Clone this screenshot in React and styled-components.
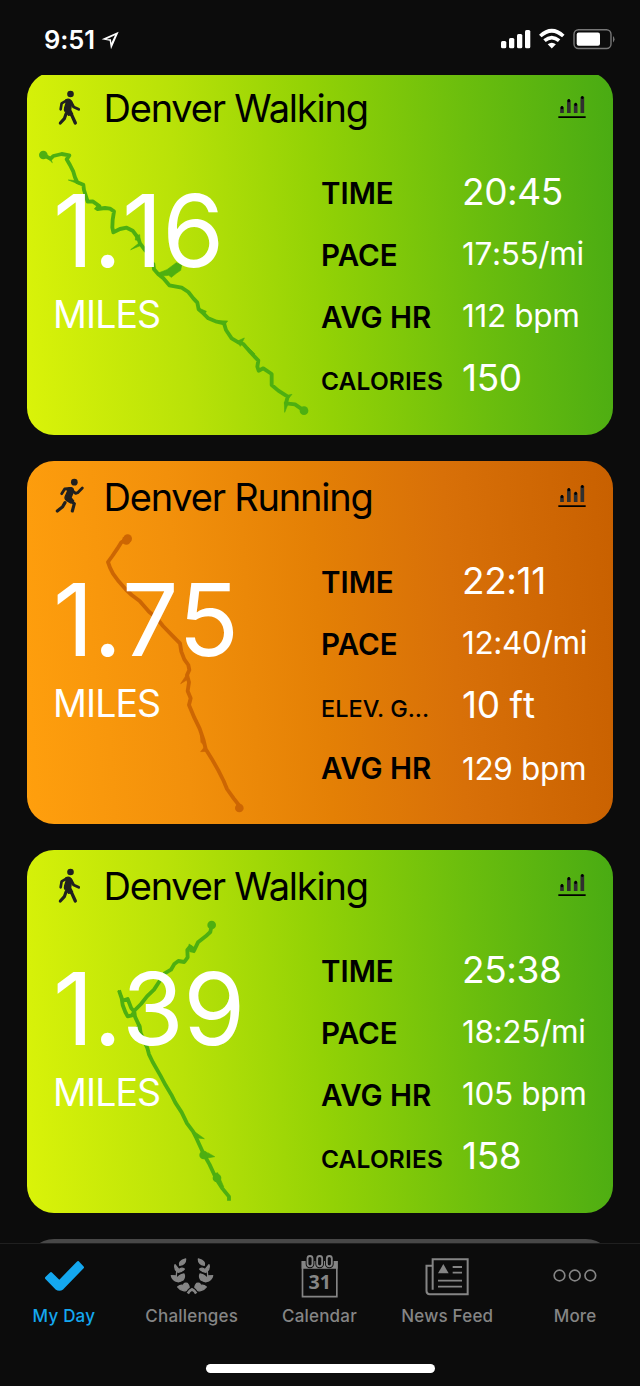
import styled, { createGlobalStyle } from "styled-components";

const GlobalStyle = createGlobalStyle`
    * {
        box-sizing: border-box;
    }

    body {
        margin: 0;
        background: #0C0C0C;
        font-family: Inter, "Liberation Sans", sans-serif;
    }
`

const Screen = styled.div`
    width: 640px;
    height: 1386px;
    display: flex;
    flex-direction: column;
    overflow: hidden;
    background: #0C0C0C;
`

const StatusBar = styled.header`
    height: 75px;
    flex: none;
    display: flex;
    justify-content: space-between;
    padding: 25px 25px 0 44px;
    color: #FFF;
`

const Clock = styled.div`
    display: flex;
    gap: 6.5px;
    font-size: 25.5px;
    line-height: 29px;
    font-weight: 600;
    letter-spacing: -0.1px;
`

const Feed = styled.main`
    flex: 1;
    min-height: 0;
    overflow: hidden;
    padding: 0 27.5px 0 27px;
`

const CardList = styled.div`
    display: flex;
    flex-direction: column;
    gap: 26px;
    margin-top: -3px;
`

const themes = {
    walking : {
        background : "linear-gradient(86deg, #DAF309 0%, #B9E208 27%, #93D205 50%, #6CBE0D 75%, #49AB13 100%)",
        route : "#4DAF11",
    },
    running : {
        background : "linear-gradient(86deg, #FF9F0D 0%, #F2900B 27%, #E48005 50%, #D87008 72%, #C86000 100%)",
        route : "#CC6603",
    },
}

const Card = styled.article`
    position: relative;
    height: 363px;
    flex: none;
    border-radius: 27px;
    overflow: hidden;
    background: ${(props) => props.$background};
`

const EmptyCard = styled.div`
    height: 363px;
    flex: none;
    border-radius: 27px;
    background: #484848;
`

const RouteMap = styled.svg`
    position: absolute;
    top: 0;
    left: 0;
    width: 293.33px;
    height: 363px;
`

const CardHeader = styled.div`
    position: relative;
    height: 71px;
    display: flex;
    align-items: center;
    padding: 1px 27px 0 22px;
`

const Title = styled.h2`
    flex: 1;
    margin: 0 0 0 9.5px;
    font-size: 38px;
    line-height: 70px;
    font-weight: 375;
    letter-spacing: -1.2px;
    color: #000;
    white-space: nowrap;
`

const CardBody = styled.div`
    position: relative;
    display: flex;
    padding-left: 26px;
`

const Summary = styled.div`
    width: 268px;
    padding-top: 37.5px;
    color: #FFF;
`

const Distance = styled.div`
    font-size: 100px;
    line-height: 100px;
    font-weight: 375;
    font-kerning: none;
    letter-spacing: -0.3px;
`

const Unit = styled.div`
    margin-top: 3.5px;
    font-size: 37.5px;
    line-height: 62px;
    font-weight: 400;
    letter-spacing: -0.9px;
`

const Metrics = styled.dl`
    flex: 1;
    margin: 0;
    padding-top: 16.5px;
`

const Metric = styled.div`
    height: 62px;
    display: flex;
    align-items: baseline;
    white-space: nowrap;

    /* keeps every row on one baseline whatever its text size */
    &::before {
        content: "\\200b";
        width: 0;
        font-size: 37px;
        line-height: 62px;
    }
`

const labelSizes = {
    large : "font-size: 29.5px; letter-spacing: 0;",
    medium : "font-size: 24.5px; letter-spacing: 0.15px;",
    small : "font-size: 23.5px; font-weight: 550; letter-spacing: 0;",
}

const Label = styled.dt`
    width: 141px;
    line-height: 1;
    font-weight: 600;
    color: #000;
    ${(props) => labelSizes[props.$size]}
`

const Value = styled.dd`
    position: relative;
    top: ${(props) => props.$small ? "-1px" : "1px"};
    margin: 0;
    font-size: ${(props) => props.$small ? "31.5px" : "37px"};
    line-height: 1;
    font-weight: 375;
    font-kerning: none;
    letter-spacing: ${(props) => props.$small ? "-0.35px" : "-0.4px"};
    color: #FFF;

    ${Metric}:last-child & {
        top: 1px;
    }
`

const TabBar = styled.nav`
    height: 143px;
    flex: none;
    display: grid;
    grid-template-columns: repeat(5, 1fr);
    grid-template-rows: 120px 1fr;
    justify-items: center;
    padding-right: 1px;
    border-top: 1px solid #202020;
    background: #0C0C0C;
`

const Tab = styled.a`
    display: flex;
    flex-direction: column;
    align-items: center;
    padding-top: 9px;
    color: ${(props) => props.$active ? "#14A8F0" : "#858585"};
`

const TabIcon = styled.svg`
    width: 48px;
    height: 44px;
    display: block;
    overflow: visible;
`

const TabLabel = styled.span`
    margin-top: 7px;
    font-size: 17px;
    line-height: 24px;
    font-weight: 500;
    letter-spacing: 0.2px;
    white-space: nowrap;
`

const HomeIndicator = styled.div`
    grid-column: 1 / -1;
    width: 229px;
    height: 9px;
    margin-left: 1px;
    border-radius: 5px;
    background: #FFF;
`

const SignalIcons = styled.svg`
    width: 114px;
    height: 22px;
    margin-top: 3px;
`

const Arrow = () => (
    <svg width="18" height="30" viewBox="0 0 54 90">
        <path d="M2 43 L53 20 L30 73 L26 47 Z M16 43 L30 43 L31 54 L42 31 Z" fill="#FFF" fillRule="evenodd" />
    </svg>
)

const Walker = () => (
    <svg width="45" height="45" viewBox="0 0 135 135" fill="none" stroke="#202020" strokeLinecap="round" strokeLinejoin="round">
        <circle cx="64.500" cy="24" r="10" fill="#202020" stroke="none" />
        <path d="M52 44 L38 52 L35 70" strokeWidth="8" />
        <path d="M66 48 L74 63 L89 70" strokeWidth="8.500" />
        <path d="M50 42 Q58 37 64 42 Q70 47 67 55 L65 72 L71 84 L59 88 L48 76 Q45 72 47 65 L51 52 Z" fill="#202020" strokeWidth="4" />
        <path d="M61 77 L69 89 L79 111" strokeWidth="10" />
        <path d="M51 84 L46 98 L34 111" strokeWidth="9.500" />
    </svg>
)

const Runner = () => (
    <svg width="45" height="45" viewBox="0 0 135 135" fill="none" stroke="#202020" strokeLinecap="round" strokeLinejoin="round">
        <circle cx="76" cy="21.500" r="10" fill="#202020" stroke="none" />
        <path d="M64 40 L47 42 L38 56" strokeWidth="8.500" />
        <path d="M69 46 L80 55 L86 53 L100 39" strokeWidth="8.500" />
        <path d="M53 42 Q66 34 72 41 Q75 46 72 53 L66 68 L74 78 L65 84 L52 76 Q46 71 49 64 L56 48 Z" fill="#202020" strokeWidth="4" />
        <path d="M60 74 L76 86 L70 108" strokeWidth="9.500" />
        <path d="M48 83 L41 95 L25 108" strokeWidth="9.500" />
    </svg>
)

const ChartIcon = () => (
    <svg width="28" height="26" viewBox="0 0 84 78">
        <path d="M12 54 V37 M32.500 54 V16 M53 54 V27 M73 54 V6" stroke="#303030" strokeWidth="11" />
        <path d="M12 39 V37 M32.500 18 V16 M53 29 V27 M73 8 V7" stroke="#000" strokeWidth="8" strokeLinecap="round" />
        <path d="M1 66.500 H83" stroke="#000" strokeWidth="5" />
    </svg>
)

const CheckIcon = () => (
    <TabIcon viewBox="0 0 144 132">
        <path d="M19 75 L33 61 L58 86 L114 28 L128 43 L67 106 Q58 113 49 106 Z" fill="currentColor" stroke="currentColor" strokeWidth="8" strokeLinejoin="round" />
    </TabIcon>
)

const Leaves = () => (
    <g stroke="currentColor" strokeWidth="4" strokeLinejoin="round">
        <path d="M53 18 Q53 34 35 37 Q30 25 53 18 Z" />
        <path d="M21 35 L33 50 Q40 42 49 48 Q40 58 31 58 Q17 50 21 35 Z" />
        <path d="M10 68 L25 69 L27 78 Q31 66 48 63 Q52 72 45 81 Q36 87 29 86 Q13 83 10 68 Z" />
        <path d="M29 102 Q37 94 46 97 Q48 88 58 91 Q67 102 61 110 Q55 115 46 113 Q35 111 29 102 Z" />
        <path d="M26 54 L25 70" fill="none" />
    </g>
)

const LaurelIcon = () => (
    <TabIcon viewBox="0 0 144 132" fill="currentColor">
        <Leaves />
        <g transform="translate(144 0) scale(-1 1)">
            <Leaves />
        </g>
        <path d="M56 119 Q62 108 72 104 Q82 108 88 119 L81 124 Q78 117 72 114 Q66 117 63 124 Z" stroke="#0C0C0C" strokeWidth="6" paintOrder="stroke" />
    </TabIcon>
)

const DateNumber = styled.text`
    font-family: "Open Sans", sans-serif;
    font-size: 59px;
    font-weight: 700;
`

const CalendarIcon = () => (
    <TabIcon viewBox="-2 0 144 132" fill="none" stroke="currentColor">
        <path d="M20.500 24 V131 H123.500 V24" strokeWidth="5" />
        <path d="M18 24 H126 V47 H18 Z" fill="currentColor" stroke="none" />
        {
            [43, 72, 101].map((x) => (
                <g key={x}>
                    <rect x={x - 8} y="9" width="16" height="32" rx="8" fill="#0C0C0C" stroke="#0C0C0C" strokeWidth="10" />
                    <rect x={x - 7.5} y="9" width="15" height="31" rx="7.500" strokeWidth="5.500" />
                </g>
            ))
        }
        <DateNumber x="72.500" y="108" textAnchor="middle" fill="currentColor" stroke="none">31</DateNumber>
    </TabIcon>
)

const NewsIcon = () => (
    <TabIcon viewBox="0 0 144 132" fill="none" stroke="currentColor" strokeWidth="6">
        <path d="M29 110 V18.500 H134 V123.500 H20 Q10.500 123.500 10.500 114 V38.500 H29" />
        <path d="M45 61 L61 33 L77 61 Z" fill="currentColor" stroke="none" />
        <path d="M89 42 H117 M89 59 H117 M45 83 H117 M45 101 H117" strokeWidth="5.500" />
    </TabIcon>
)

const MoreIcon = () => (
    <TabIcon viewBox="0 0 144 132" fill="none" stroke="currentColor" strokeWidth="5">
        <circle cx="25.500" cy="67.500" r="16" />
        <circle cx="71.500" cy="67.500" r="16" />
        <circle cx="118" cy="67.500" r="16" />
    </TabIcon>
)

// routes are traced in thirds of a pixel from the card's top left corner
const firstWalk = {
    line : "49,249 71,260 79,252 104,246 127,250 119,262 129,279 139,299 144,316 151,331 169,338 171,354 182,389 197,388 217,402 211,411 234,408 249,410 261,418 257,444 256,466 259,481 279,471 299,467 317,476 329,492 334,499 339,514 354,534 367,546 369,569 379,576 381,592 394,607 409,619 427,640 464,647 484,660 499,679 511,692 515,712 529,724 544,739 569,749 591,754 597,774 614,799 634,811 649,816 669,839 694,866 691,884 695,896 709,889 734,906 734,939 754,956 782,974 777,994 804,997 831,1016",
    blobs : "M124 324 L151 326 L160 338 Z M71 260 L76 272 L60 256 Z M340 510 L311 533 L342 520 Z M326 492 L338 488 L339 506 L325 504 Z M211 400 L220 402 L214 414 L202 411 Z M392 604 L420 593 L448 572 L464 579 L461 595 L448 604 L433 616 L425 610 L405 612 Z M575 746 L602 747 L592 760 Z M630 808 L652 798 L640 823 Z M664 826 L684 846 L680 850 L662 834 Z M782 970 L795 967 L780 985 Z M772 990 L773 1021 L784 994 Z M515 708 L538 718 L532 728 Z",
    dots : [[49, 249], [831, 1016]],
}

const run = {
    line : "299,234 283,244 271,263 256,285 243,303 249,320 258,338 275,361 296,385 314,402 338,420 366,452 390,472 408,495 436,524 459,547 463,572 472,595 484,612 487,627 480,642 486,664 482,690 491,712 486,732 502,770 518,803 530,838 536,864 554,893 574,928 590,960 600,984 620,1012 637,1034",
    blobs : "M486 630 L461 668 L484 654 Z M520 820 L522 844 L534 856 Z M534 856 L521 872 L541 871 Z",
    dots : [[302, 233], [298, 238], [637, 1041]],
}

const secondWalk = {
    line : "276,421 284,445 287,465 295,486 302,499 315,496 322,485 313,475 302,447 288,452 M322,485 324,500 338,530 341,549 361,594 366,613 377,636 400,676 416,706 433,734 445,758 464,787 480,820 498,844 508,864 519,888 530,912 548,944 561,972 573,995 586,1015 606,1040 606,1052 M318,486 342,462 360,439 381,419 398,393 413,370 432,359 442,342 454,333 472,336 482,322 481,300 489,290 501,302 513,277 536,259 550,246 554,225",
    blobs : "M274 420 L288 441 L284 454 Z M504 846 L532 866 L512 864 Z M542 908 L563 920 L540 924 Z M341 524 L342 548 L327 531 Z M486 282 L500 291 L503 308 L488 305 Z M560 972 L572 968 L590 1010 L582 1008 Z",
    dots : [[554, 225], [530, 915], [570, 984]],
}

const activities = [
    {
        kind : "walking",
        title : "Denver Walking",
        miles : "1.16",
        route : firstWalk,
        metrics : [["TIME", "20:45"], ["PACE", "17:55/mi"], ["AVG HR", "112 bpm"], ["CALORIES", "150", "medium"]],
    },
    {
        kind : "running",
        title : "Denver Running",
        miles : "1.75",
        route : run,
        metrics : [["TIME", "22:11"], ["PACE", "12:40/mi"], ["ELEV. G...", "10 ft", "small"], ["AVG HR", "129 bpm"]],
    },
    {
        kind : "walking",
        title : "Denver Walking",
        miles : "1.39",
        route : secondWalk,
        metrics : [["TIME", "25:38"], ["PACE", "18:25/mi"], ["AVG HR", "105 bpm"], ["CALORIES", "158", "medium"]],
    },
]

const tabs = [
    ["My Day", CheckIcon],
    ["Challenges", LaurelIcon],
    ["Calendar", CalendarIcon],
    ["News Feed", NewsIcon],
    ["More", MoreIcon],
]

const Route = ({ route, color }) => (
    <RouteMap viewBox="0 0 880 1089" fill={color} stroke={color}>
        <path d={"M" + route.line} fill="none" strokeWidth="11.500" strokeLinejoin="round" />
        <path d={route.blobs} strokeWidth="2" />
        {
            route.dots.map(([x, y]) => <circle key={x} cx={x} cy={y} r="13" stroke="none" />)
        }
    </RouteMap>
)

const ActivityCard = ({ activity }) => {
    const theme = themes[activity.kind];

    return (
        <Card $background={theme.background}>
            <Route route={activity.route} color={theme.route} />
            <CardHeader>
                {activity.kind === "running" ? <Runner /> : <Walker />}
                <Title>{activity.title}</Title>
                <ChartIcon />
            </CardHeader>
            <CardBody>
                <Summary>
                    <Distance>{activity.miles}</Distance>
                    <Unit>MILES</Unit>
                </Summary>
                <Metrics>
                    {
                        activity.metrics.map(([label, value, size = "large"]) => (
                            <Metric key={label}>
                                <Label $size={size}>{label}</Label>
                                <Value $small={value.length > 6}>{value}</Value>
                            </Metric>
                        ))
                    }
                </Metrics>
            </CardBody>
        </Card>
    )
}

const App = () => {
    return (
        <>
            <GlobalStyle />
            <Screen>
                <StatusBar>
                    <Clock>
                        9:51
                        <Arrow />
                    </Clock>
                    <SignalIcons viewBox="501 28 114 22" fill="#FFF">
                        <rect x="501" y="41" width="5.300" height="7.300" rx="1.500" />
                        <rect x="509" y="38" width="5.300" height="10.300" rx="1.500" />
                        <rect x="517" y="34" width="5.300" height="14.300" rx="1.500" />
                        <rect x="525" y="30" width="5.300" height="18.300" rx="1.500" />
                        <g fill="none" stroke="#FFF" strokeWidth="3.700">
                            <path d="M540.300 36 Q551.800 25.500 563.300 36" />
                            <path d="M544.500 40.700 Q551.800 34.500 559.100 40.700" />
                        </g>
                        <path d="M547.700 44.300 Q551.800 41.200 555.900 44.300 L551.800 48.500 Z" />
                        <rect x="574" y="29.700" width="37" height="18.800" rx="4.500" fill="none" stroke="#777" strokeWidth="1.400" />
                        <rect x="576.700" y="32.500" width="23.300" height="13.200" rx="2" />
                        <path d="M613 36 Q616 39 613 42.500 Z" fill="#777" />
                    </SignalIcons>
                </StatusBar>
                <Feed>
                    <CardList>
                        {
                            activities.map((activity, id) => <ActivityCard key={id} activity={activity} />)
                        }
                        <EmptyCard />
                    </CardList>
                </Feed>
                <TabBar>
                    {
                        tabs.map(([name, Icon], id) => (
                            <Tab key={name} $active={id === 0}>
                                <Icon />
                                <TabLabel>{name}</TabLabel>
                            </Tab>
                        ))
                    }
                    <HomeIndicator />
                </TabBar>
            </Screen>
        </>
    )
}

export default App;
